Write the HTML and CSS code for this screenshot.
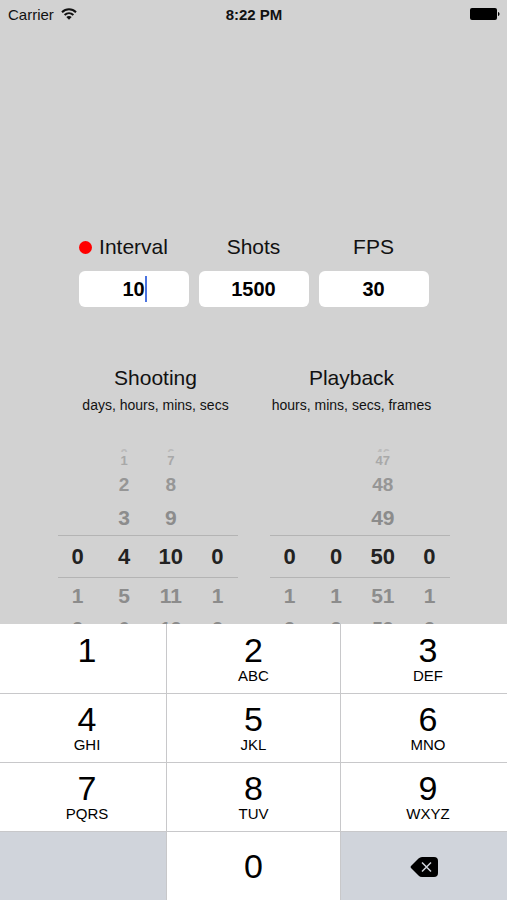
FILE: index.html
```
<!DOCTYPE html>
<html lang="en">
<head>
<meta charset="UTF-8">
<meta name="viewport" content="width=device-width, initial-scale=1">
<title>Timelapse Calculator</title>
<link rel="stylesheet" href="styles.css">
</head>
<body>
	<header class="status">
		<div class="carrier">
			<span>Carrier</span>
			<svg width="16" height="12" viewBox="0 0 16 12" fill="none" stroke="#111" stroke-width="2">
				<path d="M1 4.2C5 .2 11 .2 15 4.2"/>
				<path d="M3.6 7C6.2 4.5 9.8 4.5 12.4 7"/>
				<path d="M8 11.8L5.3 9C6.8 7.6 9.2 7.6 10.7 9Z" fill="#111" stroke="none"/>
			</svg>
		</div>
		<div class="time">8:22 PM</div>
		<svg class="battery" width="30" height="12" viewBox="0 0 30 12">
			<rect x="0" y="0" width="27" height="12" rx="2"/>
			<path d="M28 4C30 4.6 30 7.4 28 8Z"/>
		</svg>
	</header>

	<main>
		<form class="fields">
			<div class="field">
				<label for="interval"><i class="dot"></i><span>Interval</span></label>
				<div class="box">
					<input type="text" id="interval" inputmode="numeric" value="10">
					<i class="caret"></i>
				</div>
			</div>
			<div class="field">
				<label for="shots"><span>Shots</span></label>
				<div class="box"><input type="text" id="shots" inputmode="numeric" value="1500"></div>
			</div>
			<div class="field">
				<label for="fps"><span>FPS</span></label>
				<div class="box"><input type="text" id="fps" inputmode="numeric" value="30"></div>
			</div>
		</form>

		<div class="titles">
			<div>
				<h2>Shooting</h2>
				<p>days, hours, mins, secs</p>
			</div>
			<div>
				<h2>Playback</h2>
				<p>hours, mins, secs, frames</p>
			</div>
		</div>

		<div class="pickers">
			<!-- days, hours, mins, secs -->
			<div class="picker">
				<div class="row edge"><span></span><span>0</span><span>6</span><span></span></div>
				<div class="row far"><span></span><span>1</span><span>7</span><span></span></div>
				<div class="row mid"><span></span><span>2</span><span>8</span><span></span></div>
				<div class="row near"><span></span><span>3</span><span>9</span><span></span></div>
				<div class="row selected"><span>0</span><span>4</span><span>10</span><span>0</span></div>
				<div class="row near"><span>1</span><span>5</span><span>11</span><span>1</span></div>
				<div class="row last"><span>2</span><span>6</span><span>12</span><span>2</span></div>
			</div>
			<!-- hours, mins, secs, frames -->
			<div class="picker">
				<div class="row edge"><span></span><span></span><span>46</span><span></span></div>
				<div class="row far"><span></span><span></span><span>47</span><span></span></div>
				<div class="row mid"><span></span><span></span><span>48</span><span></span></div>
				<div class="row near"><span></span><span></span><span>49</span><span></span></div>
				<div class="row selected"><span>0</span><span>0</span><span>50</span><span>0</span></div>
				<div class="row near"><span>1</span><span>1</span><span>51</span><span>1</span></div>
				<div class="row last"><span>2</span><span>2</span><span>52</span><span>2</span></div>
			</div>
		</div>
	</main>

	<div class="keypad">
		<button type="button">1<small></small></button>
		<button type="button">2<small>ABC</small></button>
		<button type="button">3<small>DEF</small></button>
		<button type="button">4<small>GHI</small></button>
		<button type="button">5<small>JKL</small></button>
		<button type="button">6<small>MNO</small></button>
		<button type="button">7<small>PQRS</small></button>
		<button type="button">8<small>TUV</small></button>
		<button type="button">9<small>WXYZ</small></button>
		<div class="blank"></div>
		<button type="button">0</button>
		<button type="button" class="delete" aria-label="Delete">
			<svg width="28" height="20" viewBox="0 0 28 20">
				<path d="M1 9L8.500 1.500Q10 0 12 0H24Q28 0 28 4V16Q28 20 24 20H12Q10 20 8.500 18.500L1 11Q0 10 1 9Z"/>
				<path d="M12 5.500L21 14.500M21 5.500L12 14.500" stroke="#d0d4db" stroke-width="1.500"/>
			</svg>
		</button>
	</div>
</body>
</html>
```

FILE: styles.css
```
* {
	box-sizing: border-box;
}

body {
	margin: 0;
	height: 100vh;
	display: flex;
	flex-direction: column;
	background-color: #d2d2d2;
	color: #111;
	font-family: "Liberation Sans", Arial, sans-serif;
}

/* status bar */
.status {
	display: grid;
	grid-template-columns: 1fr auto 1fr;
	align-items: center;
	height: 28px;
	padding: 0 7px 0 8px;
	font-size: 15px;
}

.carrier {
	display: flex;
	align-items: center;
	gap: 7px;
}

.time {
	font-weight: bold;
}

.battery {
	justify-self: end;
}

main {
	flex: 1;
	min-height: 0;
	overflow: hidden;
	padding-top: 207px;
}

/* input fields */
.fields {
	display: grid;
	grid-template-columns: repeat(3, 1fr);
	gap: 10px;
	max-width: 350px;
	margin: 0 auto;
}

.field label {
	display: grid;
	grid-template-columns: 14px 1fr 14px;
	align-items: center;
	height: 24px;
	margin-bottom: 12px;
	font-size: 21px;
}

.field label span {
	grid-column: 2;
	text-align: center;
}

.dot {
	width: 13px;
	height: 13px;
	border-radius: 50%;
	background-color: #ff0000;
}

.box {
	position: relative;
}

.box input {
	display: block;
	width: 100%;
	height: 36px;
	padding: 0;
	border: 0;
	border-radius: 6px;
	background-color: white;
	color: #000;
	font: bold 20px "Liberation Sans", Arial, sans-serif;
	text-align: center;
	outline: none;
}

.caret {
	position: absolute;
	top: 5px;
	left: 60%;
	width: 2px;
	height: 26px;
	background-color: #4a73e0;
}

/* picker headings */
.titles {
	display: grid;
	grid-template-columns: 1fr 1fr;
	max-width: 392px;
	margin: 58px auto 0;
	text-align: center;
}

.titles h2 {
	margin: 0;
	font-size: 21px;
	font-weight: normal;
	line-height: 26px;
}

.titles p {
	margin: 5px 0 0;
	font-size: 14px;
	line-height: 18px;
}

/* wheels, rows get smaller towards the edge */
.pickers {
	display: grid;
	grid-template-columns: 1fr 1fr;
	gap: 32px;
	max-width: 392px;
	margin: 34px auto 0;
}

.row {
	display: grid;
	grid-template-columns: repeat(4, 40px);
	justify-content: space-between;
	align-items: center;
	text-align: center;
	font-weight: bold;
	color: #8c8c8c;
}

.edge {
	height: 4px;
	overflow: hidden;
	align-items: end;
	font-size: 13px;
	line-height: 12px;
	color: #bbb;
}

.far {
	height: 18px;
	font-size: 13px;
	line-height: 18px;
	color: #a8a8a8;
}

.mid {
	height: 30px;
	font-size: 19px;
	color: #969696;
}

.near {
	height: 35px;
	font-size: 21px;
}

.selected {
	height: 43px;
	border-top: 1px solid #b4b4b4;
	border-bottom: 1px solid #b4b4b4;
	font-size: 22px;
	color: #222;
}

.last {
	height: 32px;
	font-size: 19px;
	line-height: 32px;
}

/* number keyboard */
.keypad {
	display: grid;
	grid-template-columns: 166fr 173fr 166fr;
	grid-template-rows: 69px 68px 68px 68px;
	gap: 1px;
	background-color: #c8c8ca;
}

.keypad button {
	display: flex;
	flex-direction: column;
	align-items: center;
	justify-content: center;
	padding: 0 0 0 8px;
	border: 0;
	background-color: white;
	color: #000;
	font: 34px/34px "Liberation Sans", Arial, sans-serif;
}

.keypad button:nth-child(3n+2) {
	padding: 0;
}

.keypad small {
	height: 18px;
	font-size: 15px;
	line-height: 18px;
}

.keypad .blank,
.keypad .delete {
	background-color: #d0d4db;
}

.keypad .delete {
	padding: 2px 0 0;
}
```
